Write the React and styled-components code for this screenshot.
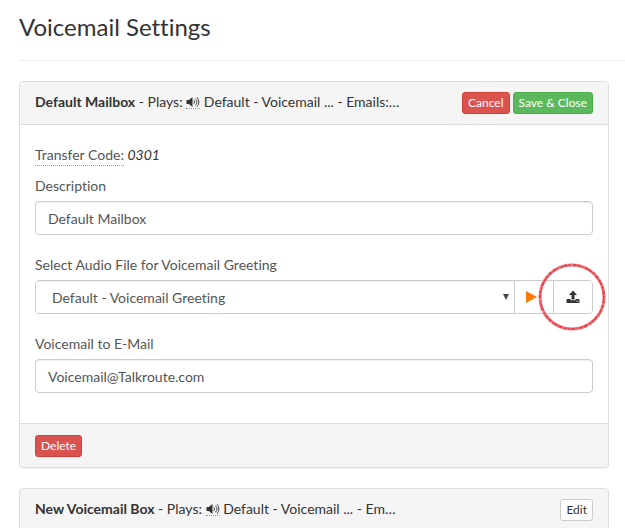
import { useState } from 'react';
import styled, { createGlobalStyle, css } from 'styled-components';

const mailbox = {
    name: 'Default Mailbox',
    code: '0301',
    email: 'Voicemail@Talkroute.com',
};

function App() {
    const [description, setDescription] = useState(mailbox.name);
    const [email, setEmail] = useState(mailbox.email);

    return(
        <Page>
            <GlobalStyle/>
            <Title>Voicemail Settings</Title>
            <Panel>
                <PanelHeader>
                    <Summary name={mailbox.name} emails='Emails:…'/>
                    <Actions>
                        <Button type='button' $kind='danger'>Cancel</Button>
                        <Button type='submit' form='mailbox' $kind='success'>Save &amp; Close</Button>
                    </Actions>
                </PanelHeader>
                <PanelBody id='mailbox' onSubmit={(e) => e.preventDefault()}>
                    <TransferCode>
                        <span>Transfer Code:</span> <em>{mailbox.code}</em>
                    </TransferCode>
                    <Field>
                        <label htmlFor='description'>Description</label>
                        <Input
                            id='description'
                            type='text'
                            value={description}
                            onChange={(e) => setDescription(e.target.value)}
                        />
                    </Field>
                    <Field>
                        <label htmlFor='greeting'>Select Audio File for Voicemail Greeting</label>
                        <InputGroup>
                            <SelectBox>
                                <select id='greeting'>
                                    <option>Default - Voicemail Greeting</option>
                                </select>
                                <ArrowIcon/>
                            </SelectBox>
                            <GroupButton type='button' aria-label='Play'>
                                <PlayIcon/>
                            </GroupButton>
                            <GroupButton type='button' aria-label='Upload'>
                                <UploadIcon/>
                                <Highlight/>
                            </GroupButton>
                        </InputGroup>
                    </Field>
                    <Field>
                        <label htmlFor='email'>Voicemail to E-Mail</label>
                        <Input
                            id='email'
                            type='text'
                            value={email}
                            onChange={(e) => setEmail(e.target.value)}
                        />
                    </Field>
                </PanelBody>
                <PanelFooter>
                    <Button type='button' $kind='danger'>Delete</Button>
                </PanelFooter>
            </Panel>
            <Panel>
                <PanelHeader>
                    <Summary name='New Voicemail Box' emails='Em…'/>
                    <Actions>
                        <Button type='button'>Edit</Button>
                    </Actions>
                </PanelHeader>
            </Panel>
        </Page>
    )
}
export default App;

function Summary({ name, emails }) {
    return(
        <SummaryText>
            <strong>{name}</strong> - Plays: <Sound><VolumeIcon/></Sound> Default - Voicemail ... - {emails}
        </SummaryText>
    )
}

function VolumeIcon() {
    return(
        <svg width='14' height='12' viewBox='0 0 14 12' aria-hidden='true'>
            <path d='M0.5 4h2.3L6.5 1v10L2.8 8H0.5z' fill='#333'/>
            <path
                d='M7.8 4.2a2.6 2.6 0 0 1 0 3.6M9.4 2.7a4.8 4.8 0 0 1 0 6.6M11 1.2a7 7 0 0 1 0 9.6'
                fill='none' stroke='#444' strokeWidth='1'
            />
        </svg>
    )
}

function ArrowIcon() {
    return(
        <svg width='6' height='6' viewBox='0 0 6 6' aria-hidden='true'>
            <path d='M0 0h6L3 6z' fill='#444'/>
        </svg>
    )
}

function PlayIcon() {
    return(
        <svg width='16' height='12' viewBox='0 0 16 12' aria-hidden='true'>
            <path d='M0 0L11 6 0 12z' fill='#ff7800'/>
        </svg>
    )
}

function UploadIcon() {
    return(
        <svg width='14' height='14' viewBox='0 0 14 14' aria-hidden='true'>
            <path d='M7 0.5L11 5H8.5V9.5H5.5V5H3z' fill='#333'/>
            <path d='M1 9h3.5v1.3h5V9H13l0.5 1v3h-13v-3z' fill='#333'/>
            <path d='M10.5 11.2h2' stroke='#fff' strokeWidth='0.8'/>
        </svg>
    )
}

// hand drawn ring around the upload button
function Highlight() {
    return(
        <Ring viewBox='0 0 70 70' aria-hidden='true'>
            <circle cx='35' cy='35' r='32' stroke='#f0777e' strokeWidth='3'/>
            <circle cx='35' cy='35' r='32' stroke='#e8404a' strokeWidth='2' strokeDasharray='3 1 2 2 4 1'/>
            <circle cx='35' cy='35' r='33' stroke='#f7b5b9' strokeWidth='1' strokeDasharray='2 5 1 3'/>
        </Ring>
    )
}

const GlobalStyle = createGlobalStyle`
    * {
        box-sizing: border-box;
    }
    body {
        margin: 0;
        overflow-y: hidden;
        background: #fff;
        color: #333;
        font: 14px/20px Lato, sans-serif;
        font-variant-ligatures: none;
    }
    input, select, button {
        font: inherit;
        font-variant-ligatures: none;
    }
`;

const Page = styled.main`
    padding: 11px 0 0 19px;
`;

const Title = styled.h1`
    margin: 0 0 20px;
    padding-bottom: 17px;
    border-bottom: 1px solid #eee;
    font-size: 24px;
    line-height: 32px;
    font-weight: 400;
`;

const Panel = styled.section`
    margin: 0 16px 20px 0;
    border: 1px solid #ddd;
    border-radius: 4px;
    background: #fff;
    box-shadow: 0 1px 1px rgba(0, 0, 0, 0.05);
`;

const PanelHeader = styled.header`
    display: flex;
    align-items: center;
    justify-content: space-between;
    padding: 10px 15px;
    border-bottom: 1px solid #ddd;
    border-radius: 3px 3px 0 0;
    background: #f5f5f5;
`;

const PanelFooter = styled.footer`
    display: flex;
    padding: 11px 15px 10px;
    border-top: 1px solid #ddd;
    border-radius: 0 0 3px 3px;
    background: #f5f5f5;
`;

const SummaryText = styled.div`
    margin-bottom: 2px;
    white-space: nowrap;
`;

const Sound = styled.span`
    display: inline-block;
    border-bottom: 1px dotted #999;
    vertical-align: -2px;

    svg{
        display: block;
    }
`;

const Actions = styled.div`
    display: flex;
    gap: 3px;
`;

const kinds = {
    danger: css`
        border-color: #d43f3a;
        background: #d9534f;
        color: #fff;
    `,
    success: css`
        border-color: #4cae4c;
        background: #5cb85c;
        color: #fff;
    `,
};

const Button = styled.button`
    height: 22px;
    padding: 0 5px;
    border: 1px solid #ccc;
    border-radius: 3px;
    background: #fff;
    color: #333;
    font-size: 12px;
    line-height: 18px;
    cursor: pointer;
    ${({ $kind }) => kinds[$kind]}
`;

const PanelBody = styled.form`
    display: flex;
    flex-direction: column;
    gap: 20px;
    padding: 20px 15px 30px;
    color: #555;
`;

const TransferCode = styled.div`
    margin-bottom: -10px;

    span{
        display: inline-block;
        border-bottom: 1px dotted #999;
    }
    em{
        color: #333;
    }
`;

const Field = styled.div`
    display: flex;
    flex-direction: column;
    gap: 5px;
`;

const Input = styled.input`
    width: 100%;
    height: 34px;
    padding: 6px 12px;
    border: 1px solid #ccc;
    border-radius: 4px;
    background: #fff;
    color: #555;
    box-shadow: inset 0 1px 1px rgba(0, 0, 0, 0.075);
`;

const InputGroup = styled.div`
    display: flex;
    height: 34px;
    border: 1px solid #ccc;
    border-radius: 4px;
`;

const SelectBox = styled.div`
    display: grid;
    flex: 1;
    align-items: center;

    select{
        grid-area: 1 / 1;
        width: 100%;
        height: 32px;
        padding: 2px 16px 0;
        border: 0;
        border-radius: 3px;
        appearance: none;
        background: #fff;
        color: #555;
        box-shadow: inset 0 1px 1px rgba(0, 0, 0, 0.075);
    }
    svg{
        grid-area: 1 / 1;
        justify-self: end;
        margin-right: 5px;
        pointer-events: none;
    }
`;

const GroupButton = styled.button`
    position: relative;
    display: flex;
    align-items: center;
    justify-content: center;
    width: 39px;
    padding: 0;
    border: 0;
    border-left: 1px solid #ccc;
    border-radius: 0 3px 3px 0;
    background: #fff;
    cursor: pointer;
`;

const Ring = styled.svg`
    position: absolute;
    top: -19px;
    left: -17px;
    width: 70px;
    height: 70px;
    fill: none;
    pointer-events: none;
`;
